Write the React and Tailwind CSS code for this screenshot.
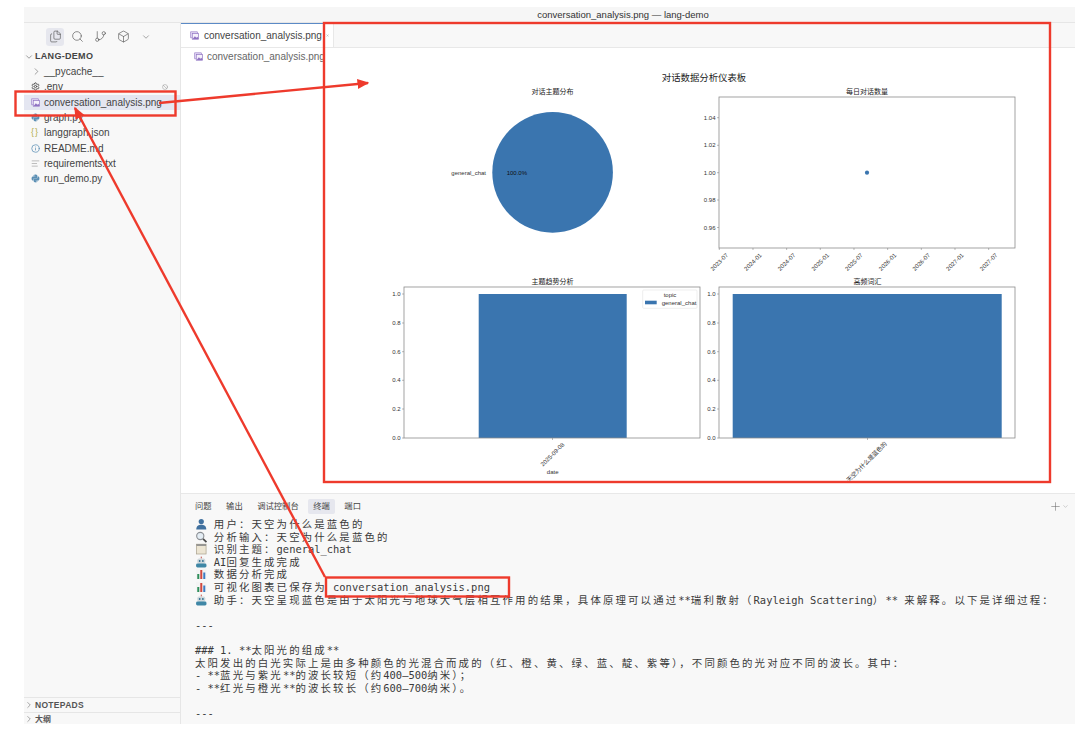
import React from 'react';
import { Files, Search, GitBranch, Box, ChevronDown, ChevronRight, Settings, Info, AlignLeft, Ban, X, Plus } from 'lucide-react';
import { FaPython } from 'react-icons/fa';

const ImageIcon = ({ size = 10 }) => (
  <svg width={size} height={size} viewBox="0 0 12 12" className="shrink-0">
    <rect x="0.5" y="1" width="9.5" height="8" rx="0.5" fill="#e3daf3" stroke="#9a7fc8" strokeWidth="0.9" />
    <rect x="3" y="3.5" width="8.5" height="7.5" fill="#f5f1fb" stroke="#8f72c2" strokeWidth="0.9" />
    <path d="M3.5 10.5 L6.5 7 L8.5 9 L9.8 7.8 L11.2 9.5 V10.7 H3.5 Z" fill="#8f72c2" />
  </svg>
);

// emoji drawn by hand, no colour emoji font in the sandbox
const Emoji = ({ type }) => {
  const shapes = {
    user: (
      <>
        <circle cx="6" cy="3.6" r="2.6" fill="#41719f" />
        <path d="M1 11.5 C1 7.8 3.4 6.8 6 6.8 C8.6 6.8 11 7.8 11 11.5 Z" fill="#41719f" />
      </>
    ),
    search: (
      <>
        <circle cx="5" cy="5" r="3.6" fill="#e4edf4" stroke="#8b8f94" strokeWidth="1.1" />
        <path d="M7.8 7.8 L11.2 11.2" stroke="#4a4a4a" strokeWidth="1.7" />
      </>
    ),
    note: (
      <>
        <rect x="1.2" y="1.2" width="9.6" height="9.8" fill="#ece5d3" stroke="#a9a08c" strokeWidth="0.7" />
        <rect x="1.2" y="1.2" width="9.6" height="1.7" fill="#8d8d8d" />
      </>
    ),
    robot: (
      <>
        <rect x="5.5" y="0.6" width="1" height="2" fill="#c0524a" />
        <rect x="2" y="2.5" width="8" height="5.4" rx="1.8" fill="#cfd8dc" />
        <circle cx="4.4" cy="5" r="0.9" fill="#2f6f8f" />
        <circle cx="7.6" cy="5" r="0.9" fill="#2f6f8f" />
        <rect x="0.8" y="7.6" width="10.4" height="3.8" rx="1.4" fill="#3f87a6" />
      </>
    ),
    chart: (
      <>
        <rect x="0.8" y="0.8" width="10.4" height="10.4" fill="#f4f4f4" />
        <rect x="2" y="6" width="2" height="5" fill="#2f8f5b" />
        <rect x="5" y="2" width="2" height="9" fill="#d1483f" />
        <rect x="8" y="4.5" width="2" height="6.5" fill="#3b7cc4" />
      </>
    ),
  };
  return (
    <svg width="12.56" height="12" viewBox="0 0 12 12" className="inline-block align-[-2px]">
      {shapes[type]}
    </svg>
  );
};

// terminal cells: wide chars take two cells, so they need extra tracking
const TermText = ({ text }) => {
  const runs = text.match(/[\x00-\x7f–]+|[^\x00-\x7f–]+/g) || [];
  return runs.map((run, i) =>
    /[\x00-\x7f–]/.test(run[0]) ? (
      <span key={i}>{run}</span>
    ) : (
      <span key={i} className="tracking-[2.13px]">{run}</span>
    )
  );
};

const termLines = [
  { emoji: 'user', text: ' 用户：天空为什么是蓝色的' },
  { emoji: 'search', text: ' 分析输入：天空为什么是蓝色的' },
  { emoji: 'note', text: ' 识别主题：general_chat' },
  { emoji: 'robot', text: ' AI回复生成完成' },
  { emoji: 'chart', text: ' 数据分析完成' },
  { emoji: 'chart', text: ' 可视化图表已保存为 conversation_analysis.png' },
  { emoji: 'robot', text: ' 助手：天空呈现蓝色是由于太阳光与地球大气层相互作用的结果，具体原理可以通过**瑞利散射（Rayleigh Scattering）** 来解释。以下是详细过程：' },
  { text: '' },
  { text: '---' },
  { text: '' },
  { text: '### 1. **太阳光的组成**' },
  { text: '太阳发出的白光实际上是由多种颜色的光混合而成的（红、橙、黄、绿、蓝、靛、紫等），不同颜色的光对应不同的波长。其中：' },
  { text: '- **蓝光与紫光**的波长较短（约400–500纳米）；' },
  { text: '- **红光与橙光**的波长较长（约600–700纳米）。' },
  { text: '' },
  { text: '---' },
];

const files = [
  { name: '__pycache__', icon: <ChevronRight size={11} strokeWidth={1.2} className="text-[#555] shrink-0" />, folder: true },
  { name: '.env', icon: <Settings size={9} strokeWidth={2.6} className="text-[#555]" />, ignored: true },
  { name: 'conversation_analysis.png', icon: <ImageIcon size={9} />, active: true },
  { name: 'graph.py', icon: <FaPython size={9} className="text-[#5b8fb4]" /> },
  { name: 'langgraph.json', icon: <span className="text-[9px] leading-none text-[#b3b04a] tracking-[1px]">{'{}'}</span> },
  { name: 'README.md', icon: <Info size={9} className="text-[#5b8fb4]" /> },
  { name: 'requirements.txt', icon: <AlignLeft size={9} className="text-[#aaa]" /> },
  { name: 'run_demo.py', icon: <FaPython size={9} className="text-[#5b8fb4]" /> },
];

const Sidebar = () => (
  <aside className="w-[157px] shrink-0 flex flex-col border-r border-[#e6e6e6] bg-[#f8f8f8] overflow-hidden">
    <div className="h-[27px] flex items-center gap-[4.7px] pl-[22px] text-[#555]">
      <span className="w-[18px] h-[18px] rounded-[3px] bg-[#e6e7ee] flex items-center justify-center">
        <Files size={13} strokeWidth={1.2} />
      </span>
      <span className="w-[18px] flex justify-center"><Search size={13} strokeWidth={1.2} /></span>
      <span className="w-[18px] flex justify-center"><GitBranch size={13} strokeWidth={1.2} /></span>
      <span className="w-[18px] flex justify-center"><Box size={13} strokeWidth={1.2} /></span>
      <span className="w-[18px] flex justify-center"><ChevronDown size={10} strokeWidth={1.2} /></span>
    </div>
    <div className="h-[13px] mb-[1px] flex items-center gap-[1px] pl-[0px] text-[9px] font-bold tracking-[0.3px] text-[#444]">
      <ChevronDown size={10} strokeWidth={1.2} />
      LANG-DEMO
    </div>
    <div className="flex-1">
      {files.map(file => (
        <div
          key={file.name}
          className={`h-[15.3px] flex items-center text-[10px] text-[#444] ${file.active ? 'bg-[#e4e6f1]' : ''}`}
        >
          <span className="w-[20px] pl-[7px] flex items-center shrink-0">{file.icon}</span>
          <span className="flex-1">{file.name}</span>
          {file.ignored && <Ban size={6} className="text-[#999] mr-[12px]" />}
        </div>
      ))}
    </div>
    <div className="h-[15px] flex items-center gap-[1px] border-t border-[#e6e6e6] text-[8.5px] font-bold tracking-[0.3px] text-[#555]">
      <ChevronRight size={10} strokeWidth={1.2} />
      NOTEPADS
    </div>
    <div className="h-[12px] flex items-start gap-[1px] pt-[1px] border-t border-[#e6e6e6] text-[8px] leading-[11px] font-bold text-[#555]">
      <ChevronRight size={10} strokeWidth={1.2} />
      大纲
    </div>
  </aside>
);

const chartText = 'fill-[#333] text-[6px]';
const axisLine = '#8c8c8c';

const Title = ({ x, y, children }) => (
  <text x={x} y={y} textAnchor="middle" className="fill-[#222] text-[7px]">{children}</text>
);

const PieChart = () => (
  <svg width="315" height="192" className="overflow-visible">
    <Title x="167.5" y="8.5">对话主题分布</Title>
    <circle cx="167.6" cy="87.4" r="60.3" fill="#3a75af" />
    <text x="101" y="89.5" textAnchor="end" className={chartText}>general_chat</text>
    <text x="121.7" y="89.5" className="fill-[#111] text-[6px]">100.0%</text>
  </svg>
);

const yTicks1 = [['1.04', 32.7], ['1.02', 60.3], ['1.00', 87.7], ['0.98', 115], ['0.96', 142.5]];
const xTicks1 = ['2023-07', '2024-01', '2024-07', '2025-01', '2025-07', '2026-01', '2026-07', '2027-01', '2027-07'];

const LineChart = () => (
  <svg width="315" height="192" className="overflow-visible">
    <Title x="167" y="8.5">每日对话数量</Title>
    <rect x="19" y="12" width="296" height="151" fill="none" stroke={axisLine} strokeWidth="0.8" />
    {yTicks1.map(([label, y]) => (
      <g key={label}>
        <path d={`M17 ${y} H19`} stroke="#777" strokeWidth="0.5" />
        <text x="15.5" y={y + 2} textAnchor="end" className={chartText}>{label}</text>
      </g>
    ))}
    {xTicks1.map((label, i) => {
      const x = 19.3 + 33.67 * i;
      return (
        <g key={label}>
          <path d={`M${x} 163 V165`} stroke="#777" strokeWidth="0.5" />
          <text x={x} y="179" textAnchor="middle" transform={`rotate(-45 ${x} 177)`} className={chartText}>{label}</text>
        </g>
      );
    })}
    <circle cx="167" cy="87.7" r="2.1" fill="#3a75af" />
  </svg>
);

const yTicks2 = [['1.0', 17], ['0.8', 46], ['0.6', 74.7], ['0.4', 103.3], ['0.2', 132], ['0.0', 161]];

const BarAxes = ({ title, bar, children }) => (
  <svg width="315" height="205" className="overflow-visible">
    <Title x="167.5" y="6.5">{title}</Title>
    <rect x={bar[0]} y="17" width={bar[1] - bar[0]} height="144" fill="#3a75af" />
    <rect x="19" y="10" width="296" height="151" fill="none" stroke={axisLine} strokeWidth="0.8" />
    {yTicks2.map(([label, y]) => (
      <g key={label}>
        <path d={`M17 ${y} H19`} stroke="#777" strokeWidth="0.5" />
        <text x="15.5" y={y + 2} textAnchor="end" className={chartText}>{label}</text>
      </g>
    ))}
    <path d="M167.5 161 V163" stroke="#777" strokeWidth="0.5" />
    {children}
  </svg>
);

const Figure = () => (
  <div className="pt-[7px] pl-[204px] overflow-hidden flex-1 bg-white">
    <div className="w-[630px]">
      <h2 className="h-[14px] pl-[8px] text-center text-[9.4px] leading-[14px] text-[#222]">对话数据分析仪表板</h2>
      <div className="grid grid-cols-[315px_315px]">
        <PieChart />
        <LineChart />
        <BarAxes title="主题趋势分析" bar={[93.7, 241.7]}>
          <text x="167.5" y="179.5" textAnchor="middle" transform="rotate(-45 167.5 177.5)" className={chartText}>2025-09-08</text>
          <text x="167.7" y="196.5" textAnchor="middle" className={chartText}>date</text>
          <rect x="257.7" y="13" width="54.3" height="18.3" rx="1" fill="#fff" stroke="#ddd" strokeWidth="0.5" />
          <text x="285" y="19.5" textAnchor="middle" className={chartText}>topic</text>
          <rect x="260" y="23.7" width="11.7" height="3.6" fill="#3a75af" />
          <text x="276.7" y="28.2" className={chartText}>general_chat</text>
        </BarAxes>
        <BarAxes title="高频词汇" bar={[32.7, 301.7]}>
          <text x="166.7" y="187" textAnchor="middle" transform="rotate(-45 166.7 185)" className={chartText}>天空为什么是蓝色的</text>
        </BarAxes>
      </div>
    </div>
  </div>
);

const panelTabs = ['问题', '输出', '调试控制台', '终端', '端口'];

const TerminalPanel = () => (
  <section className="h-[231px] shrink-0 bg-[#f8f8f8] border-t border-[#e8e8e8] overflow-hidden">
    <div className="h-[15px] mt-[5px] mb-[4px] flex items-center pl-[8.5px] pr-[6px] text-[8.3px] text-[#444]">
      {panelTabs.map(tab => (
        <span
          key={tab}
          className={`h-[15px] leading-[15px] px-[5.5px] mr-[3.5px] rounded-[2px] ${tab === '终端' ? 'bg-[#e6e7ee]' : ''}`}
        >
          {tab}
        </span>
      ))}
      <span className="ml-auto flex items-center text-[#666]">
        <Plus size={13} strokeWidth={1} />
        <ChevronDown size={7} strokeWidth={1} />
      </span>
    </div>
    <div className="pl-[14px] font-['DejaVu_Sans_Mono','Noto_Sans_CJK_SC',monospace] text-[10.43px] leading-[12.6px] text-[#3a3a3a] whitespace-pre">
      {termLines.map((line, i) => (
        <div key={i} className="h-[12.6px]">
          {line.emoji && <Emoji type={line.emoji} />}
          <TermText text={line.text} />
        </div>
      ))}
    </div>
  </section>
);

const Editor = () => (
  <main className="flex-1 min-w-0 flex flex-col bg-white">
    <div className="h-[25px] shrink-0 flex bg-[#f8f8f8] border-b border-[#e8e8e8]">
      <div className="w-[153px] flex items-center gap-[4px] pl-[9px] bg-white border-t border-t-[#5b8ac6] border-r border-r-[#e8e8e8] text-[10px] text-[#444]">
        <ImageIcon size={9} />
        <span className="flex-1 ml-[1px]">conversation_analysis.png</span>
        <X size={9} className="text-[#666] mr-[4px]" />
      </div>
    </div>
    <div className="h-[16px] shrink-0 flex items-center gap-[4px] pl-[13px] text-[10px] text-[#666]">
      <ImageIcon size={9} />
      conversation_analysis.png
    </div>
    <Figure />
    <TerminalPanel />
  </main>
);

// red annotations drawn on top of the screenshot
const Annotations = () => (
  <svg width="1080" height="734" className="absolute inset-0 pointer-events-none">
    <defs>
      <marker id="head" markerWidth="5" markerHeight="5" refX="4.4" refY="2.5" orient="auto">
        <path d="M0 0.4 L5 2.5 L0 4.6 Z" fill="#ee3a2c" />
      </marker>
    </defs>
    <g fill="none" stroke="#ee3a2c" strokeWidth="2.4">
      <rect x="324" y="23" width="726" height="459" />
      <rect x="15.5" y="91.5" width="160" height="24" />
      <rect x="326" y="577.5" width="183" height="19" />
      <path d="M159 103 L368 83" markerEnd="url(#head)" />
      <path d="M325 577 L75 108" markerEnd="url(#head)" />
    </g>
  </svg>
);

const App = () => (
  <div className="relative w-[1080px] h-[734px] bg-white pt-[7px] pl-[24px] pr-[5px] pb-[10px] font-['Liberation_Sans','Noto_Sans_CJK_SC',sans-serif] overflow-hidden">
    <div className="h-full flex flex-col">
      <header className="h-[16px] shrink-0 bg-[#f6f6f6] border-b border-[#e6e6e6] text-center pl-[147px] text-[9.5px] leading-[15px] text-[#333]">
        conversation_analysis.png — lang-demo
      </header>
      <div className="flex-1 min-h-0 flex">
        <Sidebar />
        <Editor />
      </div>
    </div>
    <Annotations />
  </div>
);

export default App;
